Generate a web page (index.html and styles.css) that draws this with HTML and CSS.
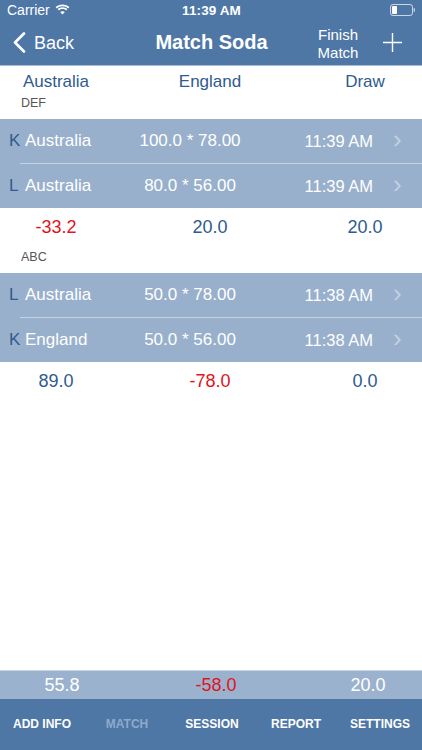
FILE: index.html
```html
<!DOCTYPE html>
<html>
<head>
<meta charset="utf-8">
<link rel="stylesheet" href="styles.css">
</head>
<body>
<div class="app">
  <div class="topbar">
    <div class="status">
      <div class="carrier">Carrier
        <svg class="wifi" width="15" height="11" viewBox="0 0 15 11">
          <path d="M7.5 2.2c2.2 0 4.2.8 5.7 2.2l1.2-1.3C12.6 1.4 10.2.4 7.5.4S2.4 1.4.6 3.1l1.2 1.3c1.5-1.4 3.5-2.2 5.7-2.2z" fill="#fff"/>
          <path d="M7.5 5c1.4 0 2.6.5 3.6 1.4l1.2-1.3C11 3.9 9.3 3.2 7.5 3.2S4 3.9 2.7 5.1l1.2 1.3C4.9 5.5 6.1 5 7.5 5z" fill="#fff"/>
          <path d="M7.5 10.6l2.3-2.5C9.2 7.6 8.4 7.2 7.5 7.2s-1.7.4-2.3.9z" fill="#fff"/>
        </svg>
      </div>
      <div class="clock">11:39 AM</div>
      <div class="battery">
        <svg width="26" height="12" viewBox="0 0 26 12">
          <rect x="0.5" y="0.5" width="22" height="11" rx="2.5" fill="none" stroke="#fff" stroke-opacity="0.7"/>
          <rect x="2" y="2" width="5" height="8" rx="1" fill="#fff"/>
          <rect x="23.5" y="4" width="1.5" height="4" rx="0.7" fill="#fff" fill-opacity="0.6"/>
        </svg>
      </div>
    </div>
    <div class="nav">
      <div class="back">
        <svg width="13" height="21" viewBox="0 0 13 21"><path d="M11 1.5 2 10.5l9 9" fill="none" stroke="#fff" stroke-width="2.6" stroke-linecap="round" stroke-linejoin="round"/></svg>
        <span>Back</span>
      </div>
      <div class="title">Match Soda</div>
      <div class="finish">Finish<br>Match</div>
      <div class="plus">
        <svg width="19" height="19" viewBox="0 0 19 19"><path d="M9.5 0v19M0 9.5h19" stroke="#fff" stroke-width="1.4"/></svg>
      </div>
    </div>
  </div>

  <div class="cols">
    <div>Australia</div><div>England</div><div>Draw</div>
  </div>

  <div class="sec-title">DEF</div>
  <div class="band">
    <div class="row"><span class="mk">K</span><span class="nm">Australia</span><span class="val">100.0 * 78.00</span><span class="tm">11:39 AM</span><span class="chev">&#x203A;</span></div>
    <div class="sep"></div>
    <div class="row"><span class="mk">L</span><span class="nm">Australia</span><span class="val">80.0 * 56.00</span><span class="tm">11:39 AM</span><span class="chev">&#x203A;</span></div>
  </div>
  <div class="totals">
    <div class="neg">-33.2</div><div>20.0</div><div>20.0</div>
  </div>

  <div class="sec-title sec2">ABC</div>
  <div class="band">
    <div class="row"><span class="mk">L</span><span class="nm">Australia</span><span class="val">50.0 * 78.00</span><span class="tm">11:38 AM</span><span class="chev">&#x203A;</span></div>
    <div class="sep"></div>
    <div class="row"><span class="mk">K</span><span class="nm">England</span><span class="val">50.0 * 56.00</span><span class="tm">11:38 AM</span><span class="chev">&#x203A;</span></div>
  </div>
  <div class="totals">
    <div>89.0</div><div class="neg">-78.0</div><div>0.0</div>
  </div>

  <div class="spacer"></div>

  <div class="summary">
    <div>55.8</div><div class="neg">-58.0</div><div>20.0</div>
  </div>
  <div class="tabs">
    <div>ADD INFO</div>
    <div class="dim">MATCH</div>
    <div>SESSION</div>
    <div>REPORT</div>
    <div>SETTINGS</div>
  </div>
</div>
</body>
</html>
```

FILE: styles.css
```css
* { box-sizing: border-box; }
html, body { margin: 0; padding: 0; }
body {
  width: 422px;
  height: 750px;
  overflow: hidden;
  font-family: "Liberation Sans", Arial, sans-serif;
  background: #fff;
}
.app {
  height: 750px;
  display: flex;
  flex-direction: column;
}
.topbar {
  background: #4e77a6;
  color: #fff;
  border-bottom: 1px solid #a7bcd5;
}
.status {
  height: 20px;
  display: grid;
  grid-template-columns: 1fr auto 1fr;
  align-items: center;
  padding: 0 6px 0 7px;
}
.carrier {
  font-size: 14px;
  display: flex;
  align-items: center;
  gap: 5px;
}
.wifi { margin-top: -1px; }
.clock {
  font-size: 13.5px;
  font-weight: bold;
  letter-spacing: 0.1px;
}
.battery { justify-self: end; display: flex; }
.nav {
  height: 45px;
  display: flex;
  align-items: center;
  padding-left: 13px;
}
.back {
  display: flex;
  align-items: center;
  gap: 8px;
  font-size: 18px;
  width: 128px;
}
.back span { margin-top: 1px; }
.title {
  font-size: 20px;
  font-weight: bold;
  width: 141px;
  text-align: center;
}
.finish {
  font-size: 15px;
  line-height: 18px;
  text-align: center;
  width: 80px;
  margin-left: 16px;
  margin-top: 2px;
}
.plus {
  margin-left: 5px;
  display: flex;
}
.cols, .totals, .summary {
  display: grid;
  grid-template-columns: 112px 196px 1fr;
  text-align: center;
  color: #2f5b8e;
}
.cols {
  height: 26px;
  padding-top: 6px;
  font-size: 17px;
  line-height: 20px;
}
.sec-title {
  height: 27px;
  padding: 4px 0 0 21px;
  font-size: 12.5px;
  line-height: 14px;
  color: #555;
}
.band {
  background: #98b0cc;
}
.row {
  height: 44px;
  display: grid;
  grid-template-columns: 16px 100px 130px 1fr 49px;
  align-items: center;
  padding-left: 9px;
  color: #fff;
  font-size: 17px;
}
.mk { color: #2f5b8e; }
.val { text-align: center; }
.tm { text-align: right; font-size: 16.5px; }
.chev {
  font-size: 26px;
  color: #c3d0df;
  padding-left: 20px;
  margin-top: -3px;
}
.sep {
  height: 1px;
  margin-left: 20px;
  background: #c3d1e2;
}
.totals {
  height: 38px;
  align-items: center;
  font-size: 18px;
}
.neg { color: #e0141c; }
.spacer { flex: 1; }
.summary {
  height: 29px;
  align-items: center;
  background: #9bb2ce;
  color: #fff;
  font-size: 18px;
  padding-left: 6px;
  border-top: 1px solid #c9d6e5;
}
.summary .neg { color: #e0141c; }
.tabs {
  height: 51px;
  background: #4e77a6;
  display: grid;
  grid-template-columns: 84px 86px 84px 84px 84px;
  align-items: center;
  text-align: center;
  color: #fff;
  font-size: 12px;
  font-weight: bold;
  padding-bottom: 2px;
}
.tabs .dim { color: #8eaacb; }
```
